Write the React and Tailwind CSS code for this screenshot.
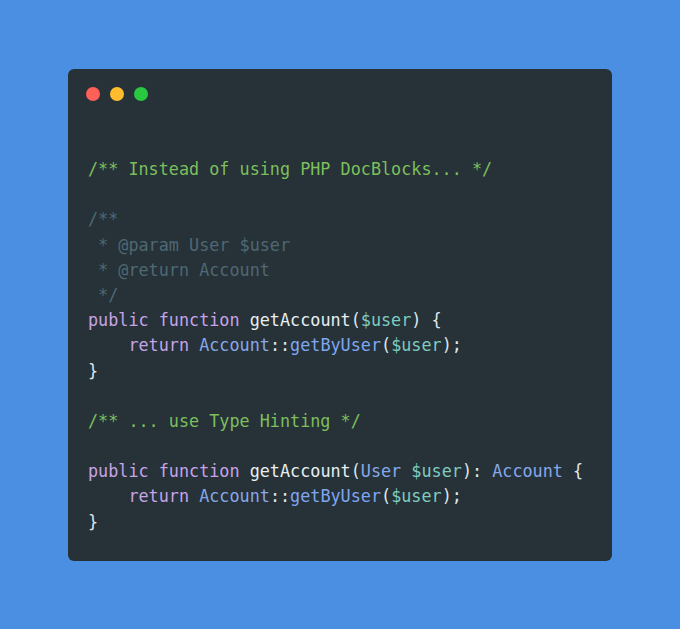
import React from 'react';

const C = {
  comment: 'text-[#7cbf5c]',
  doc: 'text-[#4f6873]',
  kw: 'text-[#c6a3e6]',
  fn: 'text-[#e8eef0]',
  type: 'text-[#87a8e8]',
  call: 'text-[#7fa6f2]',
  vari: 'text-[#7fcbbf]',
  punc: 'text-[#dfe6ea]',
};

function Line({ children }) {
  return <div className="h-[25.2px] leading-[25.2px] whitespace-pre">{children === undefined ? ' ' : children}</div>;
}

function Body({ withType }) {
  return (
    <>
      <Line>
        <span className={C.kw}>public function </span>
        <span className={C.fn}>getAccount</span>
        <span className={C.punc}>(</span>
        {withType && <span className={C.type}>User </span>}
        <span className={C.vari}>$user</span>
        <span className={C.punc}>){withType ? ': ' : ' '}</span>
        {withType && <span className={C.type}>Account </span>}
        <span className={C.punc}>{'{'}</span>
      </Line>
      <Line>
        <span className={C.kw}>    return </span>
        <span className={C.type}>Account</span>
        <span className={C.punc}>::</span>
        <span className={C.call}>getByUser</span>
        <span className={C.punc}>(</span>
        <span className={C.vari}>$user</span>
        <span className={C.punc}>);</span>
      </Line>
      <Line>
        <span className={C.punc}>{'}'}</span>
      </Line>
    </>
  );
}

export default function App() {
  return (
    <div className="w-[680px] h-[629px] bg-[#4a8fe2] flex justify-center pt-[69px]">
      <div className="w-[544px] h-[492px] bg-[#263238] rounded-[6px] pl-5 pt-[18px]">
        <div className="flex gap-[10px] -ml-[2px]">
          <span className="w-[14px] h-[14px] rounded-full bg-[#fe5f57]" />
          <span className="w-[14px] h-[14px] rounded-full bg-[#febc2e]" />
          <span className="w-[14px] h-[14px] rounded-full bg-[#28c840]" />
        </div>
        <div className="mt-[56px] text-[16.8px]" style={{ fontFamily: '"DejaVu Sans Mono", "Liberation Mono", monospace' }}>
          <Line>
            <span className={C.comment}>/** Instead of using PHP DocBlocks... */</span>
          </Line>
          <Line />
          <Line><span className={C.doc}>/**</span></Line>
          <Line><span className={C.doc}> * @param User $user</span></Line>
          <Line><span className={C.doc}> * @return Account</span></Line>
          <Line><span className={C.doc}> */</span></Line>
          <Body />
          <Line />
          <Line>
            <span className={C.comment}>/** ... use Type Hinting */</span>
          </Line>
          <Line />
          <Body withType />
        </div>
      </div>
    </div>
  );
}
